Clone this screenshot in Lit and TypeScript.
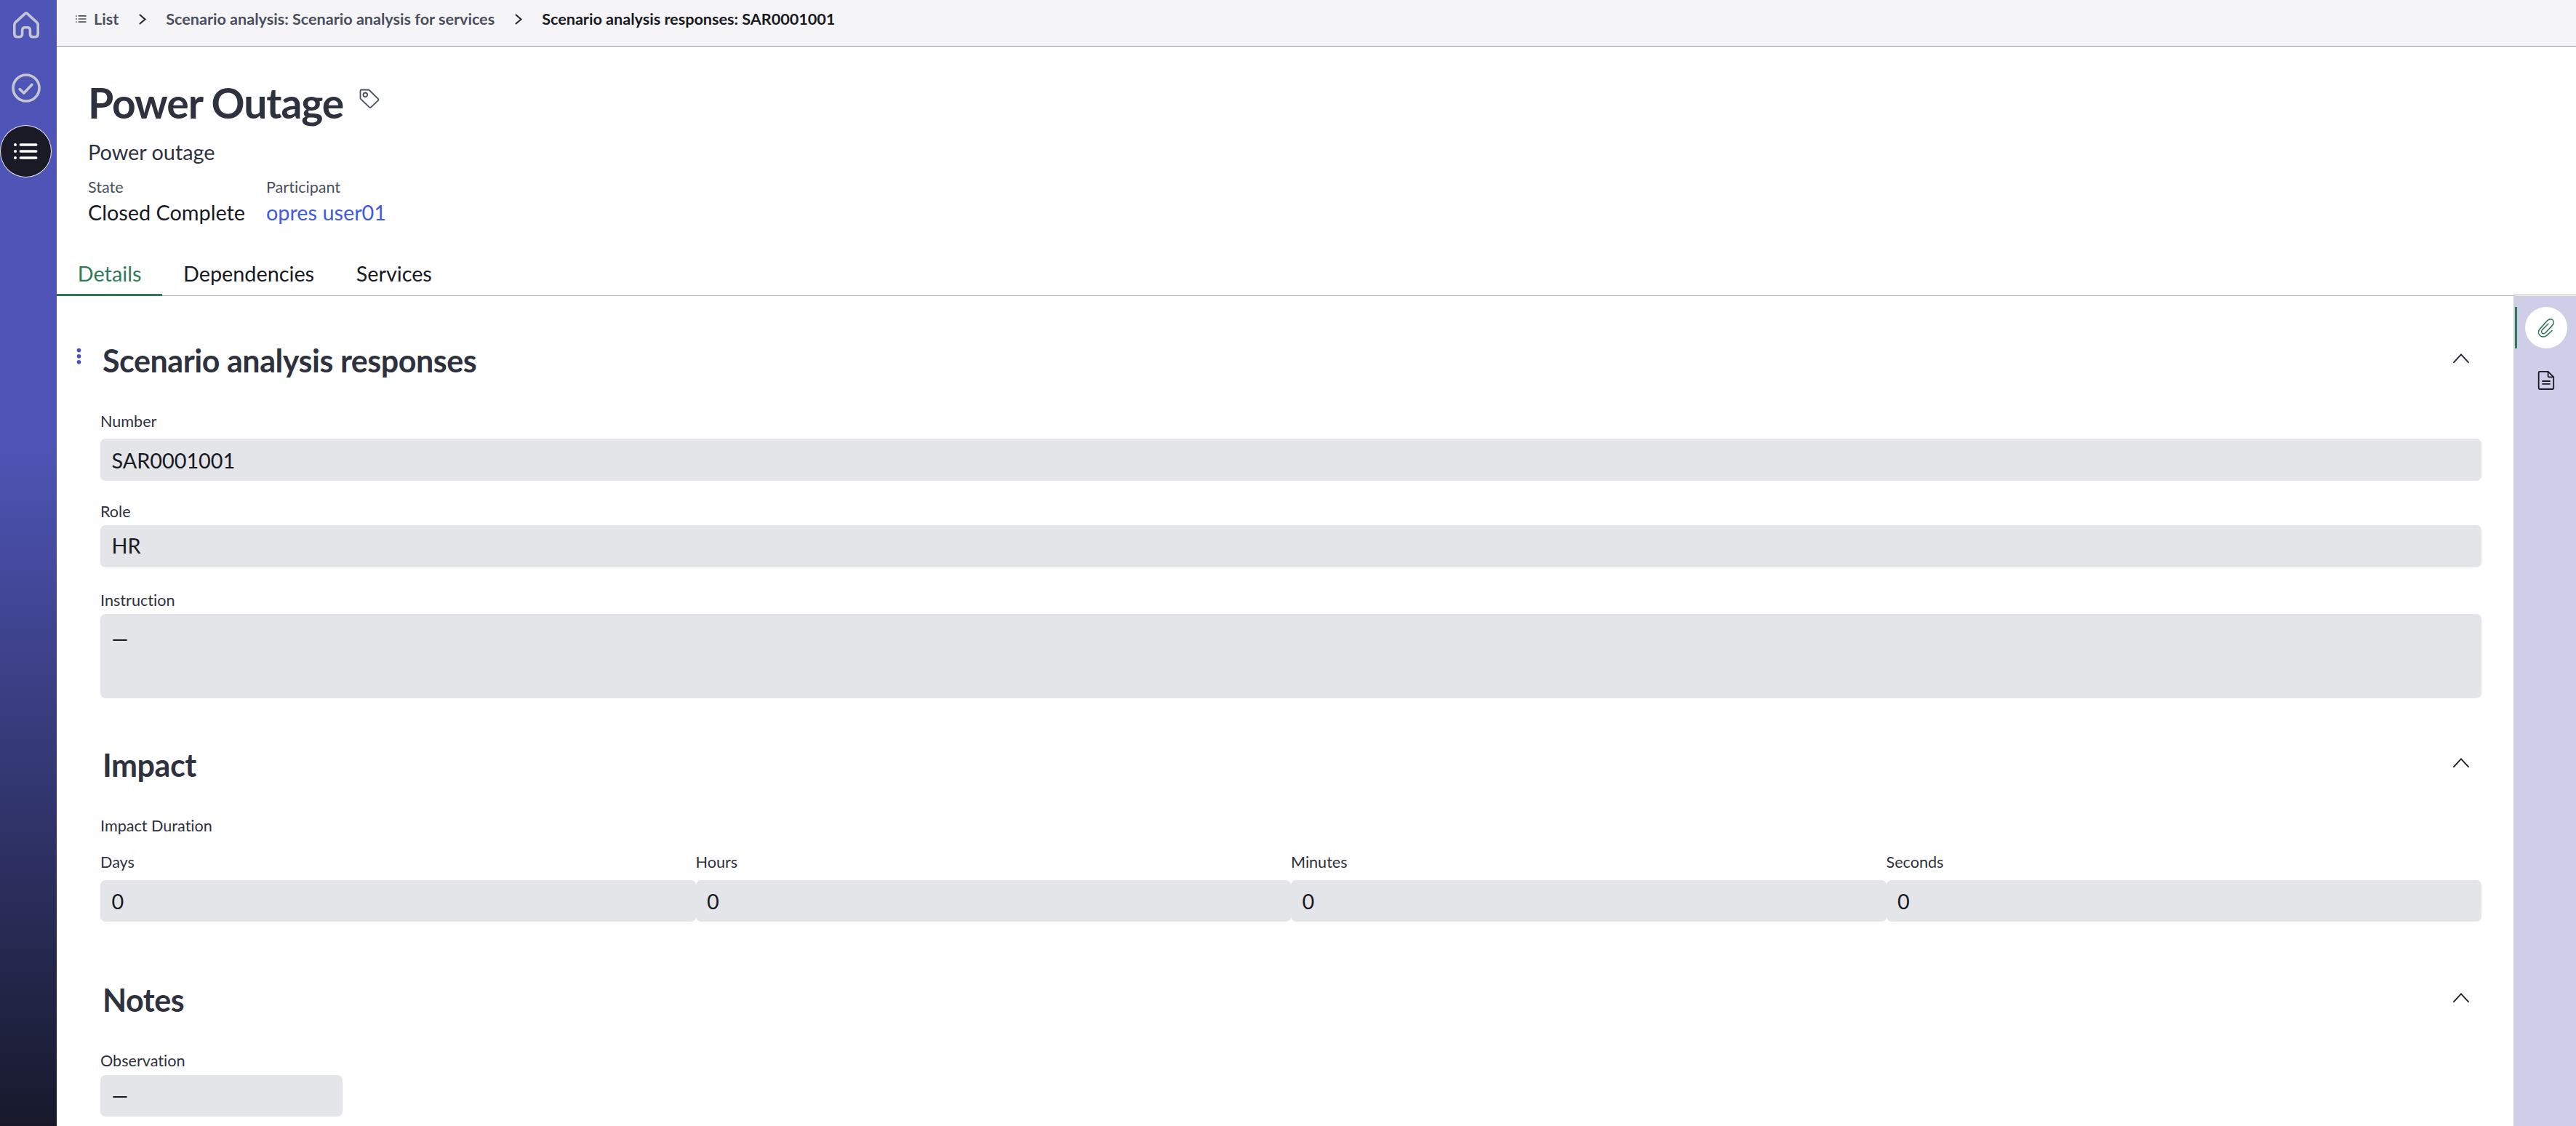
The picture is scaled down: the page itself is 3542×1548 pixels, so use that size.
import { LitElement, html, css, svg } from "lit";
import { customElement, property } from "lit/decorators.js";

const listGlyph = svg`
  <circle cx="2" cy="2" r="2"/><circle cx="2" cy="11" r="2"/><circle cx="2" cy="20" r="2"/>
  <rect x="7.5" y="0.2" width="25" height="3.6" rx="1.8"/>
  <rect x="7.5" y="9.2" width="25" height="3.6" rx="1.8"/>
  <rect x="7.5" y="18.2" width="25" height="3.6" rx="1.8"/>`;

@customElement("nav-rail")
export class NavRail extends LitElement {
  static styles = css`
    :host {
      display: flex;
      flex-direction: column;
      align-items: flex-start;
      width: 78px;
      flex: none;
      background: linear-gradient(#4f55b7 0, #4f55b7 600px, #17192b 1548px);
    }
    .item {
      width: 71px;
      height: 72px;
      display: grid;
      place-items: center;
      box-sizing: border-box;
      margin-bottom: 14px;
    }
    .first {
      margin-top: -1px;
    }
    .active {
      border-radius: 50%;
      background: #191a25;
      border: 1px solid #e6e6f2;
      margin-top: 1px;
    }
    svg {
      display: block;
    }
  `;
  render() {
    return html`
      <div class="item first">
        <svg width="38" height="38" viewBox="0 0.9 38 38" fill="none" stroke="#c5c6cf" stroke-width="3.6" stroke-linejoin="round">
          <path d="M17.6 3.6 4.3 15.6Q2.8 17 2.8 19V31.5Q2.8 35.6 6.6 35.6H9.6Q13.6 35.6 13.6 31.8V26.5Q13.6 22.6 17.4 22.6H20.6Q24.4 22.6 24.4 26.5V31.8Q24.4 35.6 28.4 35.6H31.4Q35.2 35.6 35.2 31.5V19Q35.2 17 33.7 15.6L20.4 3.6Q19 2.4 17.6 3.6Z"/>
        </svg>
      </div>
      <div class="item">
        <svg width="40" height="40" viewBox="0 0 40 40" fill="none" stroke="#c5c6cf" stroke-width="3.6" stroke-linecap="round" stroke-linejoin="round">
          <circle cx="20" cy="20" r="18"/>
          <path d="M11.2 21.6 16.8 27 27.8 15.4"/>
        </svg>
      </div>
      <div class="item active">
        <svg width="33" height="22" viewBox="0 0 33 22" fill="#ffffff">${listGlyph}</svg>
      </div>
    `;
  }
}

@customElement("crumb-bar")
export class CrumbBar extends LitElement {
  static styles = css`
    :host {
      display: flex;
      align-items: flex-start;
      box-sizing: border-box;
      height: 64px;
      padding: 13px 0 0 26px;
      background: #f5f5f7;
      border-bottom: 1px solid #9193a6;
      font-size: 21.6px;
      line-height: 26px;
      font-weight: 700;
      color: #4a4f60;
      white-space: nowrap;
    }
    .list {
      margin: 8px 10px 0 0;
    }
    .sep {
      margin: 6px 26px 0 28px;
    }
    .here {
      color: #181a23;
    }
  `;
  private sep() {
    return html`<svg class="sep" width="11" height="15" viewBox="0 0 11 15" fill="none" stroke="#20222c" stroke-width="2" stroke-linecap="round">
      <path d="M1.5 1.5 8.5 7.5 1.5 13.5"/>
    </svg>`;
  }
  render() {
    return html`
      <svg class="list" width="15" height="10" viewBox="0 0 33 22" fill="#4a4f60">${listGlyph}</svg>
      <span>List</span>
      ${this.sep()}
      <span>Scenario analysis: Scenario analysis for services</span>
      ${this.sep()}
      <span class="here">Scenario analysis responses: SAR0001001</span>
    `;
  }
}

@customElement("record-header")
export class RecordHeader extends LitElement {
  static styles = css`
    :host {
      display: block;
      box-sizing: border-box;
      height: 294px;
      padding: 42px 0 0 43px;
      color: #2e313e;
    }
    .title-row {
      display: flex;
      align-items: flex-start;
      height: 74px;
    }
    h1 {
      margin: 0;
      font-size: 57px;
      line-height: 70px;
      font-weight: 700;
      letter-spacing: -1.05px;
    }
    .tag {
      margin: 16px 0 0 22px;
    }
    .sub {
      margin-top: 12px;
      font-size: 28.8px;
      line-height: 34px;
    }
    .facts {
      display: flex;
      gap: 29px;
      margin-top: 18px;
    }
    dl {
      margin: 0;
    }
    dt {
      font-size: 21.6px;
      line-height: 26px;
      color: #4a4f60;
    }
    dd {
      margin: 5px 0 0;
      font-size: 28.8px;
      line-height: 34px;
      color: #181a23;
    }
    .link {
      color: #3f5be2;
    }
  `;
  render() {
    return html`
      <div class="title-row">
        <h1>Power Outage</h1>
        <svg class="tag" width="28" height="28" viewBox="0 0 28 28" fill="none" stroke="#4a4f60" stroke-width="1.8" stroke-linejoin="round">
          <path d="M1.5 2.8Q1.5 1.5 2.8 1.5H12.6Q13.3 1.5 13.8 2L26.1 14.2Q26.8 15 26.1 15.8L15.9 25.6Q15 26.4 14.1 25.6L2.1 14.1Q1.5 13.5 1.5 12.6Z"/>
          <circle cx="8.3" cy="8.3" r="2.8"/>
        </svg>
      </div>
      <div class="sub">Power outage</div>
      <div class="facts">
        <dl><dt>State</dt><dd>Closed Complete</dd></dl>
        <dl><dt>Participant</dt><dd class="link">opres user01</dd></dl>
      </div>
    `;
  }
}

@customElement("tab-strip")
export class TabStrip extends LitElement {
  static styles = css`
    :host {
      display: flex;
      height: 49px;
      font-size: 28.8px;
      line-height: 34px;
      color: #181a23;
      box-shadow: inset 0 -1px #adafbf;
    }
    .tab {
      box-sizing: border-box;
      padding: 1px 28.8px 0;
    }
    .on {
      color: #317a58;
      border-bottom: 3px solid #317a58;
    }
  `;
  render() {
    return html`
      <div class="tab on">Details</div>
      <div class="tab">Dependencies</div>
      <div class="tab">Services</div>
    `;
  }
}

@customElement("form-section")
export class FormSection extends LitElement {
  @property() heading = "";
  @property({ type: Boolean }) menu = false;

  static styles = css`
    :host {
      display: block;
    }
    .head {
      display: flex;
      align-items: flex-start;
      height: 54px;
      padding-right: 16px;
    }
    .dots {
      width: 7px;
      height: 24px;
      margin: 4px 29px 0 27px;
    }
    h2 {
      margin: -5px 0 0;
      flex: 1;
      font-size: 43px;
      line-height: 53px;
      font-weight: 700;
      letter-spacing: -0.45px;
      color: #2e313e;
    }
    .caret {
      margin-top: 11px;
    }
  `;
  render() {
    return html`
      <div class="head">
        <svg class="dots" viewBox="0 0 7 24" fill="#4f52bd">
          ${this.menu
            ? svg`<circle cx="3.5" cy="3.6" r="2.8"/><circle cx="3.5" cy="11.7" r="2.8"/><circle cx="3.5" cy="19.8" r="2.8"/>`
            : ""}
        </svg>
        <h2>${this.heading}</h2>
        <svg class="caret" width="24" height="15" viewBox="0 0 24 15" fill="none" stroke="#20222c" stroke-width="1.9" stroke-linecap="round">
          <path d="M2 13.2 12 2.4 22 13.2"/>
        </svg>
      </div>
      <slot></slot>
    `;
  }
}

@customElement("form-field")
export class FormField extends LitElement {
  @property() label = "";
  @property() value = "";

  static styles = css`
    :host {
      display: block;
      min-width: 0;
    }
    .label {
      font-size: 21.6px;
      line-height: 26px;
      color: #2e313e;
      white-space: nowrap;
    }
    .box {
      box-sizing: border-box;
      height: var(--box-height, 57px);
      margin-top: var(--box-gap, 7px);
      padding: var(--box-inset, 11px) 15.5px 0;
      border-radius: 7px;
      background: #e4e5e9;
      font-size: 28.8px;
      line-height: 34px;
      color: #181a23;
    }
  `;
  render() {
    return html`
      <div class="label">${this.label}</div>
      <div class="box">${this.value}</div>
    `;
  }
}

@customElement("side-panel")
export class SidePanel extends LitElement {
  static styles = css`
    :host {
      box-sizing: border-box;
      flex: none;
      width: 86px;
      margin-top: -2px;
      border-left: 2px solid #cfd0dd;
      border-top: 1px solid #adafbf;
      background: linear-gradient(#ffffff 1px, #cecee9 1px);
      padding-top: 16px;
    }
    .slot {
      display: flex;
      align-items: center;
      box-sizing: border-box;
      height: 57px;
      padding-left: 14px;
    }
    .on {
      border-left: 3px solid #317a58;
      padding-left: 11px;
      margin-bottom: 15px;
    }
    .disc {
      width: 58px;
      height: 57px;
      display: grid;
      place-items: center;
      border-radius: 50%;
    }
    .on .disc {
      background: #ffffff;
    }
  `;
  render() {
    return html`
      <div class="slot on">
        <div class="disc">
          <svg width="24" height="28" viewBox="0 0 24 28" fill="none" stroke="#317a58" stroke-width="1.6" stroke-linecap="round">
            <path d="M20 17.5 13.5 23.6C10 27 5.5 26.6 3.3 24.2C1 21.7.8 17.8 3.8 14.6L13.4 4C15.6 1.6 19 1 21 3C23 5 22.6 8.2 20.4 10.4L11.6 20C10 21.8 7.6 22.4 6.4 21C5.2 19.8 5.4 17.6 7 16L14.8 8.2"/>
          </svg>
        </div>
      </div>
      <div class="slot">
        <div class="disc">
          <svg width="24" height="28" viewBox="0 0 24 28" fill="none" stroke="#181a23" stroke-width="1.8" stroke-linejoin="round" stroke-linecap="round">
            <path d="M3 1.9H14.6L22.2 9.4V24.6Q22.2 26 20.9 26H3Q1.7 26 1.7 24.6V3.3Q1.7 1.9 3 1.9Z"/>
            <path d="M14.6 2.2V8Q14.6 9.3 15.9 9.3H22"/>
            <path d="M7 15H17M7 18.8H17"/>
          </svg>
        </div>
      </div>
    `;
  }
}

@customElement("app-root")
export class AppRoot extends LitElement {
  static styles = css`
    :host {
      display: flex;
      height: 1548px;
      overflow: hidden;
      background: #ffffff;
      font-family: Lato, "Liberation Sans", sans-serif;
      font-variant-ligatures: none;
    }
    .main {
      flex: 1;
      min-width: 0;
      display: flex;
      flex-direction: column;
    }
    .work {
      flex: 1;
      min-height: 0;
      display: flex;
    }
    .form {
      flex: 1;
      min-width: 0;
      padding-top: 67px;
      padding-right: 44px;
    }
    .fields {
      padding-left: 60px;
    }
    .number {
      margin-top: 38px;
      --box-gap: 11px;
      --box-height: 58px;
      --box-inset: 13px;
    }
    .role {
      margin-top: 29px;
      --box-gap: 6px;
      --box-height: 58px;
    }
    .instruction {
      margin-top: 32px;
      --box-gap: 6px;
      --box-height: 116px;
      --box-inset: 17px;
    }
    .impact {
      margin-top: 70px;
    }
    .group {
      margin-top: 38px;
      font-size: 21.6px;
      line-height: 26px;
      color: #2e313e;
    }
    .duration {
      display: grid;
      grid-template-columns: repeat(4, 1fr);
      margin-top: 24px;
      --box-gap: 12px;
      --box-inset: 12px;
    }
    .notes {
      margin-top: 86px;
    }
    .observation {
      margin-top: 38px;
      width: 333px;
    }
  `;
  render() {
    return html`
      <nav-rail></nav-rail>
      <div class="main">
        <crumb-bar></crumb-bar>
        <record-header></record-header>
        <tab-strip></tab-strip>
        <div class="work">
          <div class="form">
            <form-section heading="Scenario analysis responses" menu>
              <div class="fields">
                <form-field class="number" label="Number" value="SAR0001001"></form-field>
                <form-field class="role" label="Role" value="HR"></form-field>
                <form-field class="instruction" label="Instruction" value="—"></form-field>
              </div>
            </form-section>
            <form-section class="impact" heading="Impact">
              <div class="fields">
                <div class="group">Impact Duration</div>
                <div class="duration">
                  ${["Days", "Hours", "Minutes", "Seconds"].map(
                    (unit) => html`<form-field label=${unit} value="0"></form-field>`
                  )}
                </div>
              </div>
            </form-section>
            <form-section class="notes" heading="Notes">
              <div class="fields">
                <form-field class="observation" label="Observation" value="—"></form-field>
              </div>
            </form-section>
          </div>
          <side-panel></side-panel>
        </div>
      </div>
    `;
  }
}
